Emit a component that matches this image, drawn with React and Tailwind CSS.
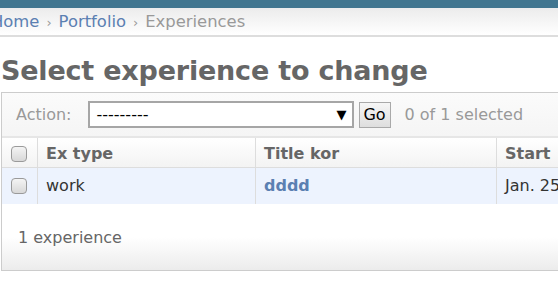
export default function App() {
  return (
    <div className="w-[558px] h-[308px] overflow-hidden bg-white font-['DejaVu_Sans',Verdana,sans-serif] text-[16px]">
      <div className="h-2 bg-[#417690]" />

      <div className="h-[29px] border-b-2 border-[#dddddd] bg-gradient-to-b from-[#ececec] to-white flex items-center whitespace-nowrap text-[#999] text-[16.4px]">
        <div className="-ml-[9px] leading-none pt-[2px]">
          <span className="text-[#5b80b2]">Home</span>
          <span className="mx-[7px] text-[13px]">›</span>
          <span className="text-[#5b80b2]">Portfolio</span>
          <span className="mx-[7px] text-[13px]">›</span>
          <span>Experiences</span>
        </div>
      </div>

      <h1 className="mt-[18px] ml-px text-[27px] leading-[31px] font-bold tracking-[-0.2px] text-[#666] whitespace-nowrap">
        Select experience to change
      </h1>

      <div className="mt-[6px] ml-px w-[640px] border border-[#cccccc] whitespace-nowrap">
        <div className="h-[45px] border-b-2 border-[#e6e6e6] bg-gradient-to-b from-[#fbfbfb] to-[#f5f5f5] flex items-center">
          <span className="ml-[14px] text-[#999]">Action:</span>
          <div className="ml-[16px] w-[266px] h-[27px] border-2 border-[#a6a6a6] bg-white flex items-center justify-between pl-[7px] pr-[5px] text-black">
            <span className="leading-none">---------</span>
            <span className="text-[13px] leading-none">▼</span>
          </div>
          <div className="ml-[5px] w-[32px] h-[26px] border border-[#a9a9a9] bg-gradient-to-b from-[#f6f6f6] to-[#dedede] flex items-center justify-center text-black leading-none">
            Go
          </div>
          <span className="ml-[14px] text-[#999]">0 of 1 selected</span>
        </div>

        <div className="h-[30px] flex border-b border-[#dddddd] bg-gradient-to-b from-white to-[#f3f3f3] font-bold text-[#666]">
          <div className="w-[36px] border-r border-[#dddddd] flex items-center pl-[9px] pt-[2px]">
            <Checkbox />
          </div>
          <div className="w-[218px] border-r border-[#dddddd] flex items-center pl-[8px] pt-[3px]">Ex type</div>
          <div className="w-[241px] border-r border-[#dddddd] flex items-center pl-[8px] pt-[3px]">Title kor</div>
          <div className="flex-1 flex items-center pl-[8px] pt-[3px]">Start</div>
        </div>

        <div className="h-[36px] flex bg-[#edf3fe] text-[#333]">
          <div className="w-[36px] border-r border-[#dddddd] flex items-center pl-[9px]">
            <Checkbox />
          </div>
          <div className="w-[218px] border-r border-[#dddddd] flex items-center pl-[8px]">work</div>
          <div className="w-[241px] border-r border-[#dddddd] flex items-center pl-[8px] font-bold text-[#5b80b2]">dddd</div>
          <div className="flex-1 flex items-center pl-[8px]">Jan. 25, 2020</div>
        </div>

        <div className="h-[66px] bg-gradient-to-b from-white from-50% to-[#ececec] flex items-center pl-[16px] pt-[2px] text-[#666]">
          1 experience
        </div>
      </div>
    </div>
  )
}

function Checkbox() {
  return (
    <div className="w-[16px] h-[16px] rounded-[4px] border border-[#9a9a9a] bg-gradient-to-b from-[#f4f4f4] to-[#d8d8d8]" />
  )
}
